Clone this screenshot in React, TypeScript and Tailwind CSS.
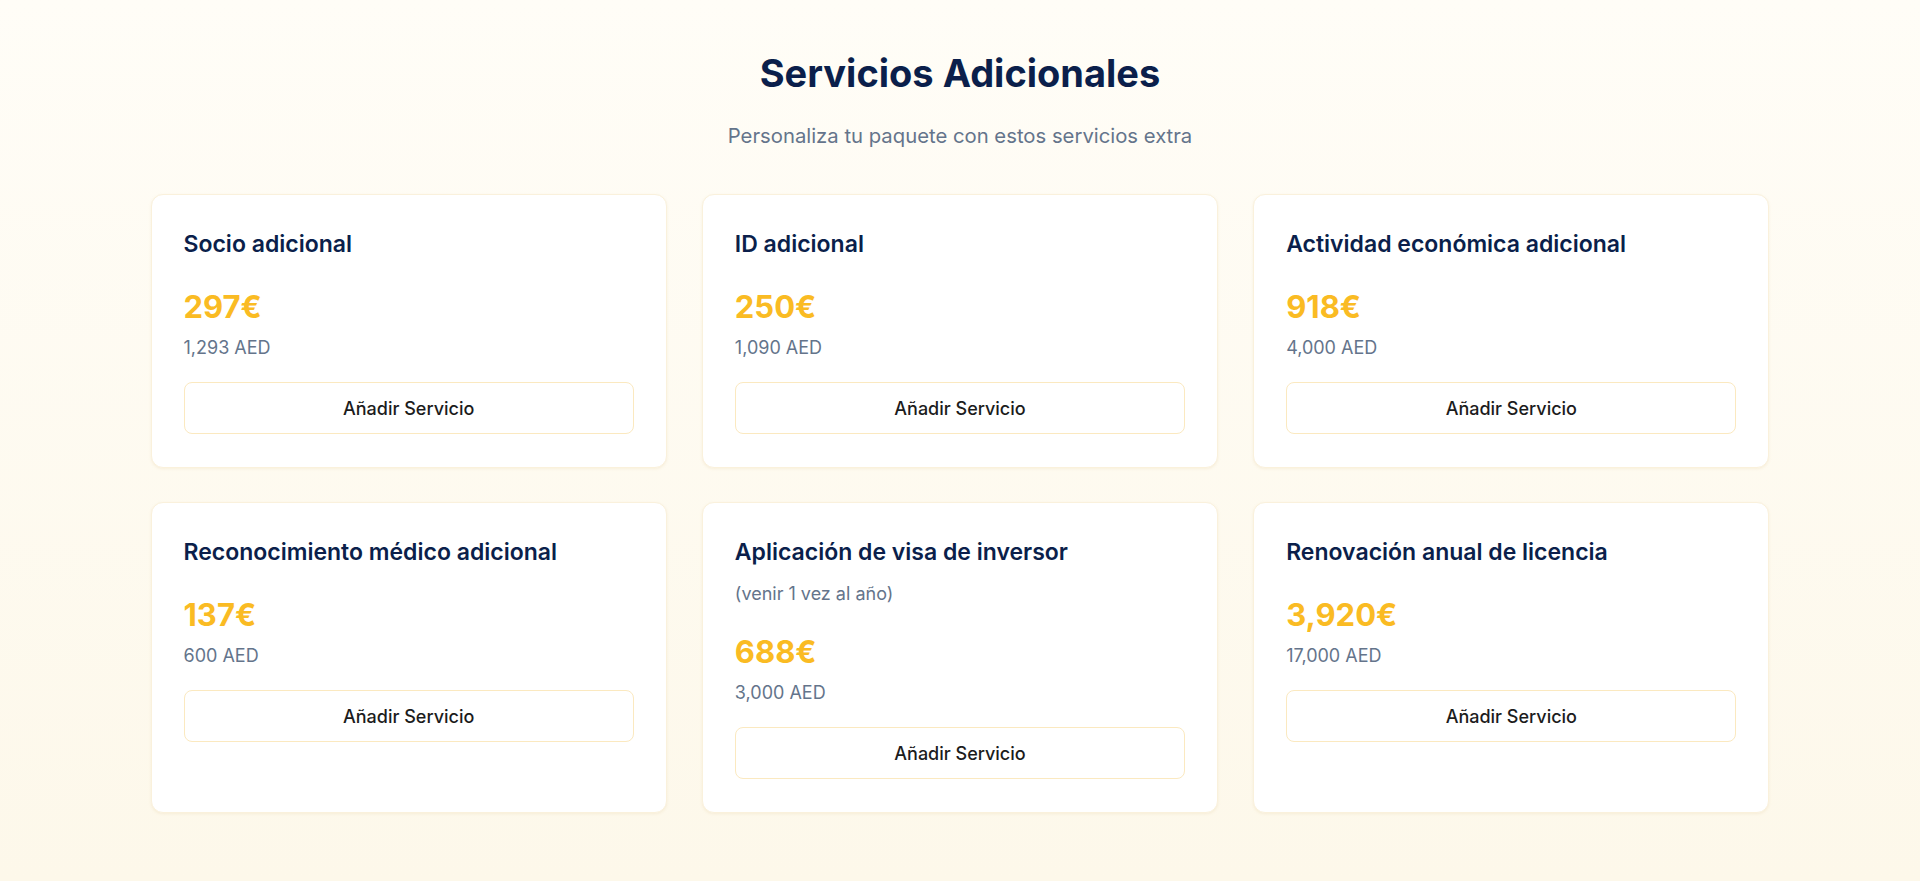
type Service = {
  title: string;
  note?: string;
  eur: string;
  aed: string;
};

const services: Service[] = [
  { title: "Socio adicional", eur: "297€", aed: "1,293 AED" },
  { title: "ID adicional", eur: "250€", aed: "1,090 AED" },
  { title: "Actividad económica adicional", eur: "918€", aed: "4,000 AED" },
  { title: "Reconocimiento médico adicional", eur: "137€", aed: "600 AED" },
  { title: "Aplicación de visa de inversor", note: "(venir 1 vez al año)", eur: "688€", aed: "3,000 AED" },
  { title: "Renovación anual de licencia", eur: "3,920€", aed: "17,000 AED" },
];

function ServiceCard({ service }: { service: Service }) {
  return (
    <div className="flex flex-col rounded-xl border border-[#faf1dc] bg-white px-8 pt-[33px] pb-[33px] shadow-[0_1px_3px_rgba(214,190,130,0.18)]">
      <h3 className="text-[23px] leading-[32px] font-semibold text-[#0b1f4b]">{service.title}</h3>
      {service.note && (
        <p className="mt-[14px] text-[18px] leading-6 text-[#64748b]">{service.note}</p>
      )}
      <div className={service.note ? "mt-[28px]" : "mt-[29px]"}>
        <p className="text-[31px] leading-9 font-bold text-[#fabb23]">{service.eur}</p>
        <p className="mt-[11px] text-[18px] leading-6 text-[#64748b]">{service.aed}</p>
      </div>
      <button className="mt-[22px] h-[52px] w-full rounded-lg border border-[#fbe9c0] bg-white text-[18px] font-medium text-[#1c1c1c]">
        Añadir Servicio
      </button>
    </div>
  );
}

export default function App() {
  return (
    <main
      className="min-h-screen w-full bg-gradient-to-b from-[#fffdf7] to-[#fdf8ea] pt-[53px] pb-16"
      style={{ fontFamily: "Inter, 'Noto Sans', sans-serif" }}
    >
      <div className="text-center">
        <h2 className="text-[38px] leading-10 font-bold text-[#0b1f4b]">Servicios Adicionales</h2>
        <p className="mt-[29px] text-[20.3px] leading-7 text-[#64748b]">
          Personaliza tu paquete con estos servicios extra
        </p>
      </div>

      <div className="mx-auto mt-[44px] grid w-[1619px] grid-cols-3 gap-x-[35px] gap-y-[34px]">
        {services.map((s) => (
          <ServiceCard key={s.title} service={s} />
        ))}
      </div>
    </main>
  );
}
